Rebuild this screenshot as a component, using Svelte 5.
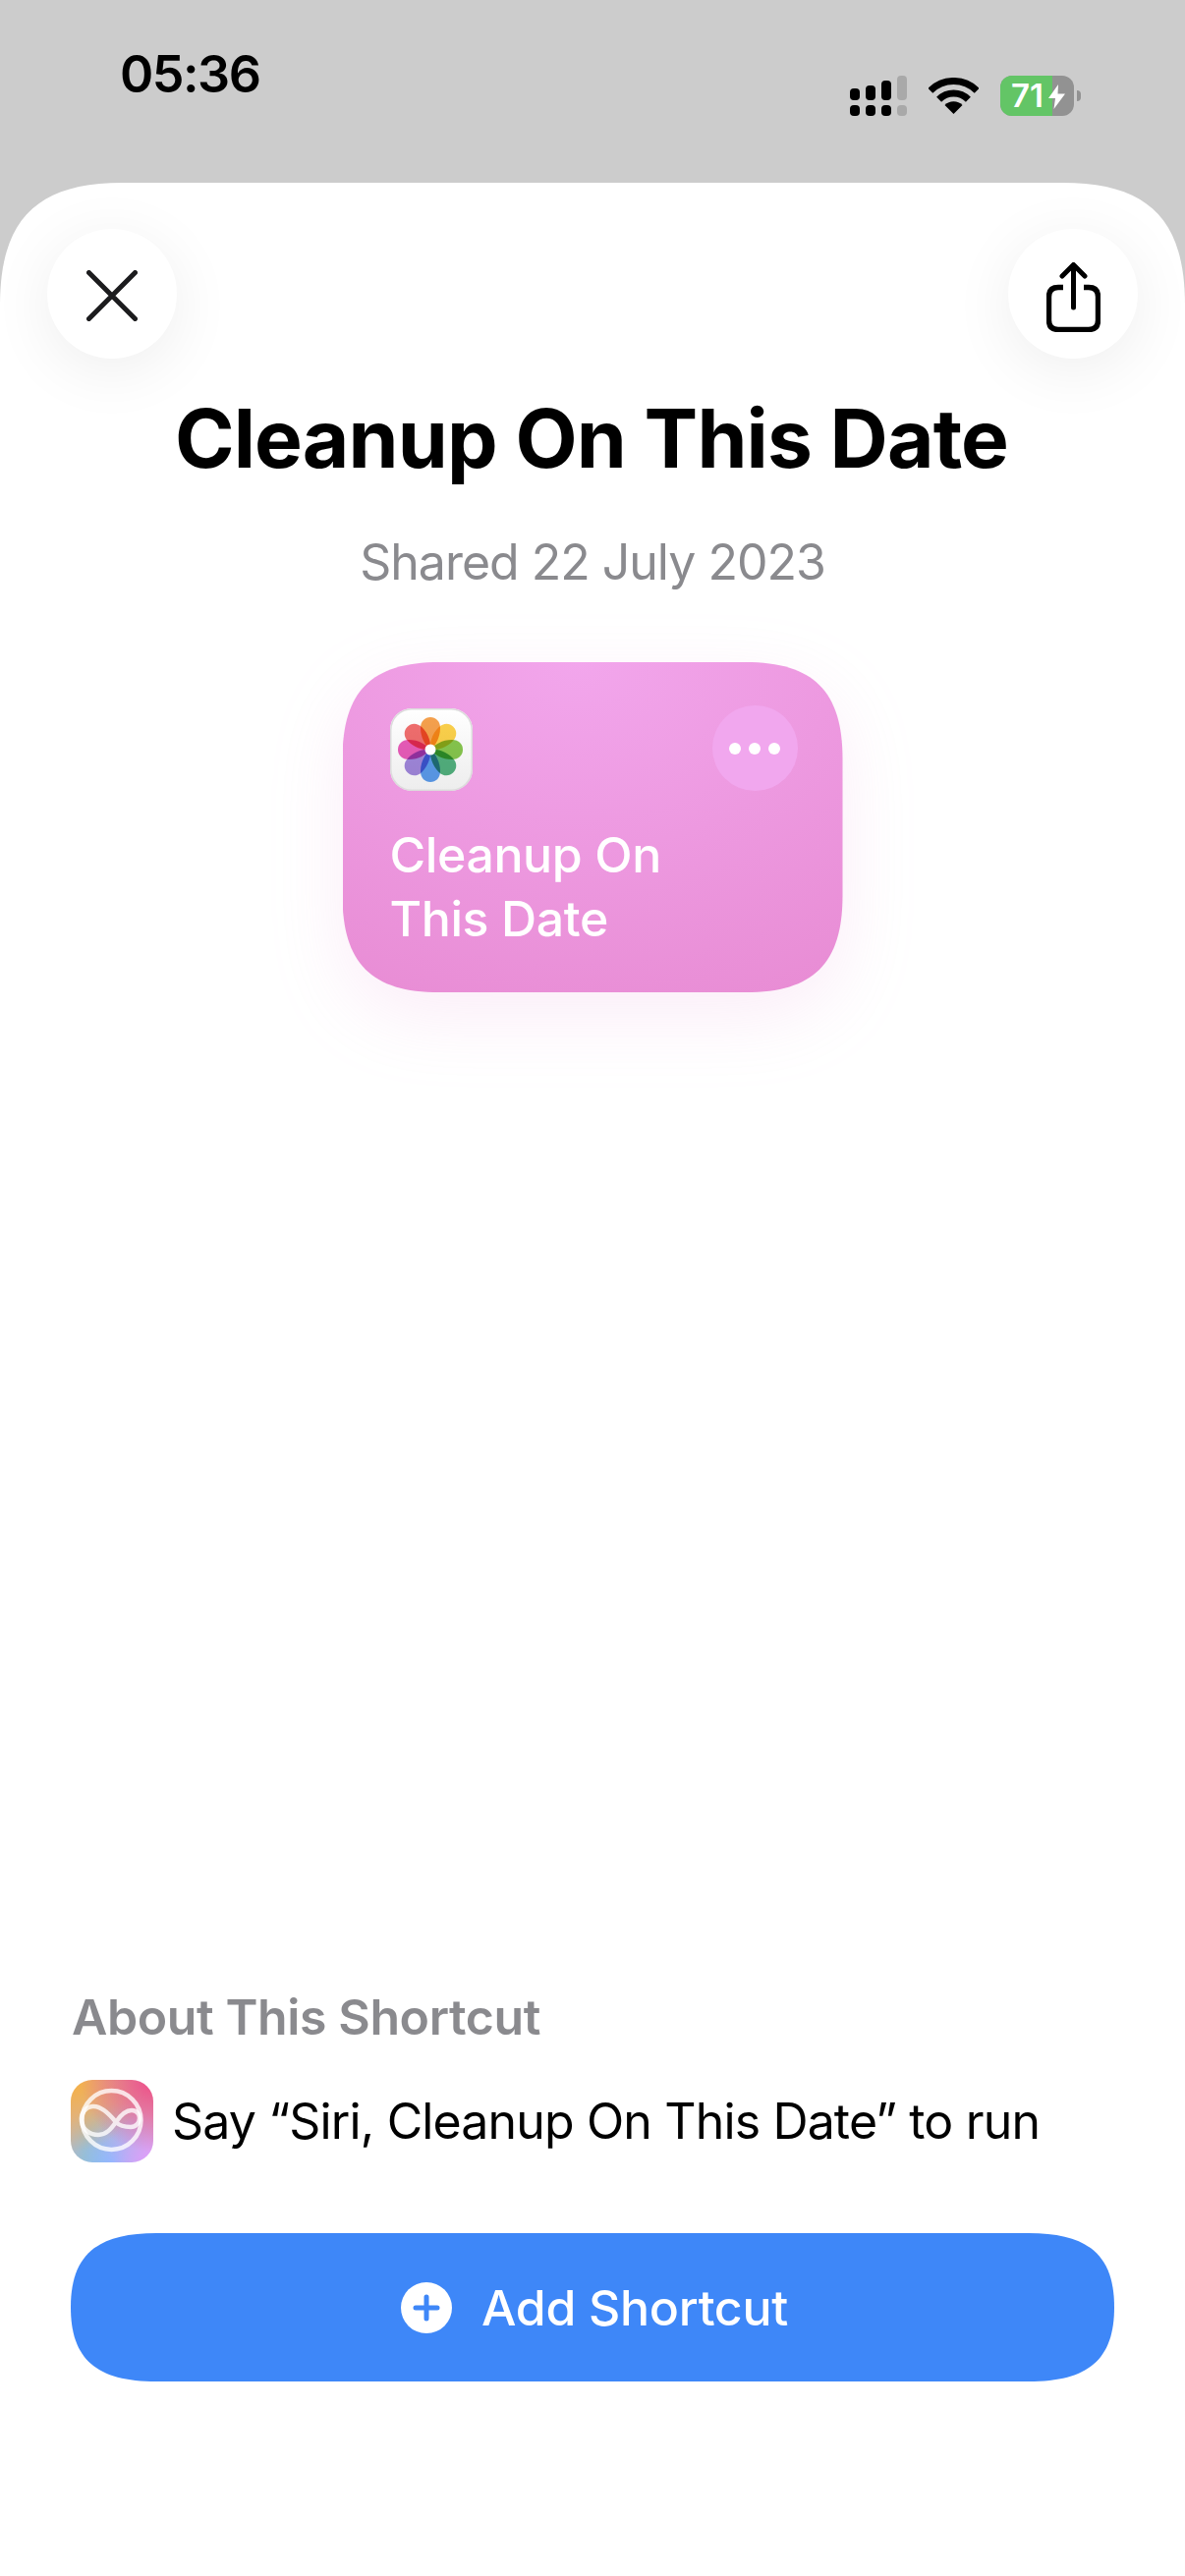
<script>
  // rounded rect with continuous corners like iOS, the curve runs further along the long side
  function squircle(w, h, r) {
    const k = 1.45
    const sx = Math.min(r * k, w / 2)
    const sy = Math.min(r * k, h / 2)
    const cx = sx * 0.3
    const cy = sy * 0.3
    return `path('M${sx} 0 L${w - sx} 0 C${w - cx} 0 ${w} ${cy} ${w} ${sy} L${w} ${h - sy} C${w} ${h - cy} ${w - cx} ${h} ${w - sx} ${h} L${sx} ${h} C${cx} ${h} 0 ${h - cy} 0 ${h - sy} L0 ${sy} C0 ${cy} ${cx} 0 ${sx} 0 Z')`
  }

  const petals = [
    { angle: 0, color: '#f5912e' },
    { angle: 45, color: '#fcc92c' },
    { angle: 90, color: '#72bd2f' },
    { angle: 135, color: '#35a468' },
    { angle: 180, color: '#3f8ceb' },
    { angle: 225, color: '#9273d8' },
    { angle: 270, color: '#e63fae' },
    { angle: 315, color: '#ef5555' }
  ]

  const bars = [
    { h: 12, off: false },
    { h: 15, off: false },
    { h: 20, off: false },
    { h: 25, off: true }
  ]
</script>

<div class="page">
  <header class="status">
    <span class="time">05:36</span>
    <div class="status-icons">
      <div class="signal">
        {#each bars as bar}
          <div class="signal-col" class:off={bar.off}>
            <span style="height: {bar.h}px"></span>
            <span class="low"></span>
          </div>
        {/each}
      </div>
      <svg class="wifi" viewBox="0 0 51 37" width="51" height="37">
        <path d="M1.8 13.3 A33.5 33.5 0 0 1 49.2 13.3" fill="none" stroke="#000" stroke-width="7" />
        <path d="M10.6 22.2 A21 21 0 0 1 40.4 22.2" fill="none" stroke="#000" stroke-width="7" />
        <path d="M25.5 37 L16.5 28 A12.7 12.7 0 0 1 34.5 28 Z" fill="#000" />
      </svg>
      <div class="battery-wrap">
        <div class="battery">
          <div class="battery-fill">71</div>
          <svg class="bolt" viewBox="0 0 17 25" width="17" height="25">
            <path d="M10 0 L0 14 L7 14 L5.5 25 L17 9.5 L9.5 9.5 Z" fill="#fff" />
          </svg>
        </div>
        <span class="nub"></span>
      </div>
    </div>
  </header>

  <main class="sheet" style="clip-path: {squircle(1206, 2800, 86)}">
    <div class="top-actions">
      <button class="round" aria-label="Close">
        <svg class="icon-close" viewBox="0 0 52 52" width="52" height="52">
          <path d="M2.5 2.5 L49.5 49.5 M49.5 2.5 L2.5 49.5" stroke="#1c1c1e" stroke-width="5" stroke-linecap="round" fill="none" />
        </svg>
      </button>
      <button class="round" aria-label="Share">
        <svg class="icon-share" viewBox="0 0 55 71" width="55" height="71">
          <path d="M17 25.5 L12 25.5 Q2.5 25.5 2.5 35 L2.5 59 Q2.5 68.5 12 68.5 L43 68.5 Q52.5 68.5 52.5 59 L52.5 35 Q52.5 25.5 43 25.5 L38 25.5" fill="none" stroke="#000" stroke-width="5.4" />
          <path d="M27.5 46 L27.5 3 M16 14 L27.5 2.5 L39 14" fill="none" stroke="#000" stroke-width="5" stroke-linecap="round" stroke-linejoin="round" />
        </svg>
      </button>
    </div>

    <h1>Cleanup On This Date</h1>
    <p class="shared">Shared 22 July 2023</p>

    <div class="card-shadow">
      <div class="card" style="clip-path: {squircle(509, 336, 68)}">
        <div class="card-top">
          <div class="photos">
            <svg viewBox="0 0 84 84" width="84" height="84">
              {#each petals as p}
                <path
                  d="M41 42 C36 38 31 30 31 20 C31 13 35.5 9 41 9 C46.5 9 51 13 51 20 C51 30 46 38 41 42 Z"
                  fill={p.color}
                  fill-opacity="0.85"
                  style="mix-blend-mode: multiply"
                  transform="rotate({p.angle} 41 42)"
                />
              {/each}
              <circle cx="41" cy="42" r="5.5" fill="#fff" />
            </svg>
          </div>
          <div class="more">
            <span></span><span></span><span></span>
          </div>
        </div>
        <div class="card-title">Cleanup On<br />This Date</div>
      </div>
    </div>

    <section class="about">
      <h2>About This Shortcut</h2>
      <div class="siri-row">
        <div class="siri">
          <svg viewBox="0 0 84 84" width="84" height="84">
            <circle cx="41.5" cy="41" r="30" fill="none" stroke="#fff" stroke-opacity="0.78" stroke-width="4.5" />
            <path d="M46 43 C38 33 30 26 22 27 C14 28 10 35 11 42 C12 51 20 56 28 56 C36 56 41 50 46 43 C50 37 56 31 62 31 C67 31 70 35 70 39 C70 44 66 48 61 48 C55 48 50 47 46 43 Z" fill="none" stroke="#fff" stroke-opacity="0.78" stroke-width="4.5" />
          </svg>
        </div>
        <span>Say “Siri, Cleanup On This Date” to run</span>
      </div>
      <button class="add" style="clip-path: {squircle(1062, 151, 60)}">
        <svg viewBox="0 0 52 52" width="52" height="52">
          <circle cx="26" cy="26" r="26" fill="#fff" />
          <path d="M26 15 V37 M15 26 H37" stroke="#3e87f8" stroke-width="5" stroke-linecap="round" />
        </svg>
        Add Shortcut
      </button>
    </section>
  </main>
</div>

<style>
  :global(body) {
    margin: 0;
    background: #fff;
  }

  .page {
    width: 1206px;
    height: 2622px;
    background: #cccccc;
    display: flex;
    flex-direction: column;
    font-family: Inter, "Noto Sans", sans-serif;
    overflow: hidden;
  }

  .status {
    height: 186px;
    flex-shrink: 0;
    box-sizing: border-box;
    padding: 46px 106px 0 122px;
    display: flex;
    justify-content: space-between;
    align-items: flex-start;
  }

  .time {
    font-size: 52px;
    line-height: 60px;
    font-weight: 600;
    letter-spacing: -1.5px;
    color: #000;
  }

  .status-icons {
    display: flex;
    align-items: flex-start;
    margin-top: 31px;
  }

  .signal {
    display: flex;
    gap: 6px;
    height: 41px;
    width: 58px;
    align-items: flex-end;
  }

  .signal-col {
    width: 10px;
    display: flex;
    flex-direction: column;
    gap: 5px;
  }

  .signal-col span {
    display: block;
    background: #000;
    border-radius: 4px;
  }

  .signal-col .low {
    height: 11px;
  }

  .signal-col.off span {
    background: #a9a9a9;
  }

  .wifi {
    margin: 2px 0 0 22px;
  }

  .battery-wrap {
    display: flex;
    align-items: center;
    margin-left: 22px;
    height: 41px;
  }

  .battery {
    position: relative;
    width: 75px;
    height: 41px;
    background: #929292;
    border-radius: 12px;
    overflow: hidden;
  }

  .battery-fill {
    width: 53px;
    height: 41px;
    box-sizing: border-box;
    padding-left: 11px;
    background: #63c566;
    color: #fff;
    font-size: 33px;
    line-height: 41px;
    font-weight: 600;
    white-space: nowrap;
  }

  .bolt {
    position: absolute;
    left: 49px;
    top: 9px;
  }

  .nub {
    width: 4px;
    height: 11px;
    margin-left: 3px;
    background: #929292;
    border-radius: 0 4px 4px 0;
  }

  .sheet {
    flex: 1;
    background: #fff;
    display: flex;
    flex-direction: column;
    align-items: center;
  }

  .top-actions {
    width: 100%;
    box-sizing: border-box;
    padding: 47px 48px 0;
    display: flex;
    justify-content: space-between;
  }

  .round {
    width: 132px;
    height: 132px;
    padding: 0;
    border: none;
    border-radius: 50%;
    background: #fff;
    box-shadow: 0 12px 64px rgba(0, 0, 0, 0.07);
    display: flex;
    align-items: center;
    justify-content: center;
  }

  .icon-close {
    margin-top: 3px;
  }

  .icon-share {
    margin-top: 6px;
  }

  h1 {
    margin: 32px 2px 0 0;
    font-size: 82px;
    line-height: 100px;
    font-weight: 700;
    letter-spacing: -0.85px;
    color: #000;
    white-space: nowrap;
  }

  .shared {
    margin: 45px 0 0;
    font-size: 50px;
    line-height: 60px;
    letter-spacing: -1px;
    color: #8a8a8e;
  }

  .card-shadow {
    margin-top: 72px;
    filter: drop-shadow(0 24px 36px rgba(232, 140, 212, 0.16));
  }

  .card {
    width: 509px;
    height: 336px;
    box-sizing: border-box;
    padding: 44px 46px 0 48px;
    background: radial-gradient(ellipse 520px 380px at 47% 0%, #f2a6ec 0%, #e88cd4 100%);
  }

  .card-top {
    display: flex;
    justify-content: space-between;
    align-items: flex-start;
  }

  .photos {
    width: 84px;
    height: 84px;
    margin-top: 3px;
    box-sizing: border-box;
    border-radius: 22px;
    background: linear-gradient(#fff, #ededed);
    box-shadow: inset 0 0 0 1.5px #dcdcdc;
    isolation: isolate;
  }

  .more {
    width: 87px;
    height: 87px;
    border-radius: 50%;
    background: #f1a7ee;
    display: flex;
    align-items: center;
    justify-content: center;
    gap: 8px;
  }

  .more span {
    width: 12px;
    height: 12px;
    border-radius: 50%;
    background: #fff;
  }

  .card-title {
    margin-top: 33px;
    font-size: 50px;
    line-height: 65px;
    font-weight: 550;
    letter-spacing: -0.4px;
    color: #fff;
  }

  .about {
    margin-top: auto;
    width: 100%;
    box-sizing: border-box;
    padding: 0 73px 198px 72px;
  }

  h2 {
    margin: 0 0 0 1px;
    font-size: 50px;
    line-height: 60px;
    font-weight: 600;
    letter-spacing: -0.4px;
    color: #8a8a8e;
  }

  .siri-row {
    margin-top: 34px;
    display: flex;
    align-items: center;
    gap: 19px;
    font-size: 50px;
    line-height: 84px;
    letter-spacing: -0.85px;
    color: #000;
  }

  .siri {
    width: 84px;
    height: 84px;
    border-radius: 22px;
    flex-shrink: 0;
    background:
      radial-gradient(circle at 100% 0%, #f04a88 0%, rgba(240, 74, 136, 0) 62%),
      radial-gradient(circle at 0% 0%, #f8b040 0%, rgba(248, 176, 64, 0) 62%),
      radial-gradient(circle at 100% 100%, #e49cff 0%, rgba(228, 156, 255, 0) 60%),
      radial-gradient(circle at 50% 100%, #62c8ff 0%, rgba(98, 200, 255, 0) 65%),
      #d0b4ac;
  }

  .add {
    margin-top: 72px;
    width: 1062px;
    height: 151px;
    border: none;
    padding: 0 0 0 4px;
    background: #3e87f8;
    color: #fff;
    font-family: inherit;
    font-size: 50px;
    font-weight: 550;
    letter-spacing: -0.3px;
    display: flex;
    align-items: center;
    justify-content: center;
    gap: 30px;
  }
</style>
